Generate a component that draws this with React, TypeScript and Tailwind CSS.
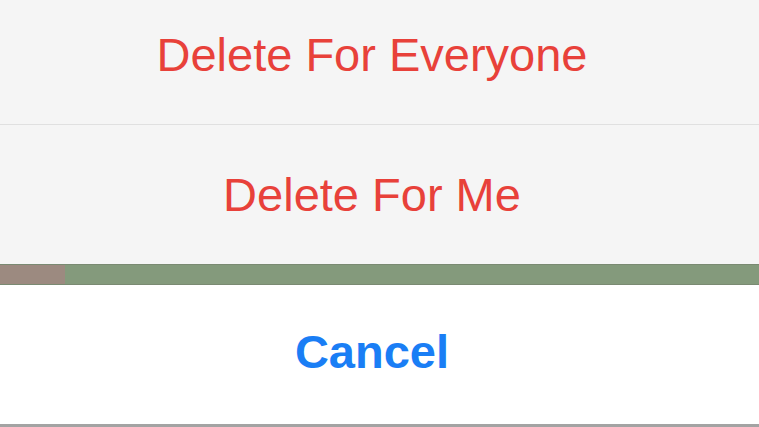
export default function App() {
  return (
    <div
      className="flex h-[427px] w-[759px] flex-col overflow-hidden bg-white"
      style={{ fontFamily: '"Liberation Sans", Arial, sans-serif' }}
    >
      <div className="flex flex-col bg-[#f5f5f5]">
        <button className="flex h-[124px] items-center justify-center pb-[14px] pr-[15px] text-[47px] text-[#e8413a]">
          Delete For Everyone
        </button>
        <div className="h-px bg-[#e0e0e0]" />
        <button className="flex h-[139px] items-center justify-center pt-[2px] pr-[15px] text-[47px] text-[#e8413a]">
          Delete For Me
        </button>
      </div>
      <div className="flex h-[21px] border-y border-[#7a8a72] bg-[#849a7c]">
        <div className="w-[65px] bg-[#9c8a80]" />
      </div>
      <button className="flex h-[139px] items-center justify-center pb-[4px] pr-[15px] text-[47px] font-bold text-[#1a7ef5]">
        Cancel
      </button>
      <div className="h-[3px] bg-[#a3a3a3]" />
    </div>
  );
}
